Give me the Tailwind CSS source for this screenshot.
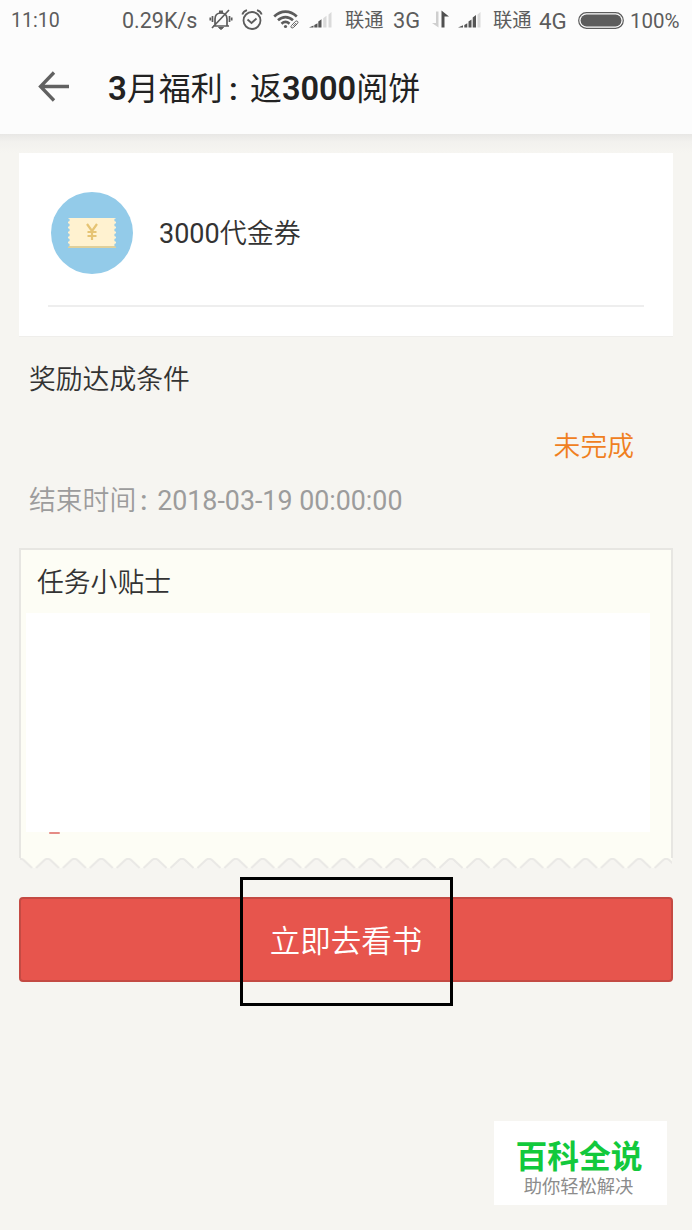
<!DOCTYPE html>
<html lang="zh-CN">
<head>
<meta charset="utf-8">
<title>3月福利</title>
<script src="https://cdn.jsdelivr.net/npm/@tailwindcss/browser@4"></script>
</head>
<body class="w-[692px] h-[1230px] overflow-hidden bg-[#f6f5f1] font-['Roboto','Noto_Sans_CJK_SC',sans-serif] text-[#333] whitespace-nowrap flex flex-col relative">
<header class="h-[134px] shrink-0 bg-[#fcfcfc] flex flex-col">
  <div class="h-10 flex items-center text-[20px] leading-10 text-[#5c5c5c]">
    <span class="ml-[11px] w-[111px] pt-px text-[19.600px]">11:10</span>
    <span class="w-[87px] pt-px text-[21.500px]">0.29K/s</span>
    <svg class="w-6 h-6 shrink-0" viewBox="0 0 24 24" fill="none" stroke="#5c5c5c" stroke-width="1.700"><path d="M4 18h16M6 18V11c0-4 2-6 6-6s6 2 6 6v7M20 2 3 20"/><path d="M9.500 19.500h5l-2.500 2z" fill="#5c5c5c" stroke-width="1"/><path d="M10 4h4" stroke-width="3"/><path d="M3.500 8v6M20.500 8v6M1.300 9.500v3M22.700 9.500v3"/></svg>
    <svg class="ml-[7px] w-6 h-6 shrink-0" viewBox="0 0 24 24" fill="none" stroke="#5c5c5c" stroke-width="1.800"><circle cx="12" cy="12.500" r="8.500"/><path d="M7.500 11.500 11.500 15l5-4.500M2.300 6.500C3 4.500 4.500 3 7 2.200M21.700 6.500C21 4.500 19.500 3 17 2.200"/></svg>
    <svg class="ml-[9px] w-[27px] h-6 shrink-0" viewBox="0 0 27 24" fill="none" stroke="#5c5c5c" stroke-width="2.600"><path d="M1.200 8.500C8 2 17 2 23.800 8.500M5 12.300c4.500-4.200 10.500-4.200 15 0M8.500 15.800c2.500-2.300 5.500-2.300 8 0"/><circle cx="12.500" cy="18.500" r="1.600" fill="#5c5c5c" stroke="none"/><path d="m18.500 17.500 4-4.200q1.500-.8 2.200.2.700 1-.2 2l-4 4q-1.500 1-2.300 0-.7-1 .3-2Zm1.500.8 3.200-3.300" stroke-width="1"/></svg>
    <svg class="ml-[8px] w-[25px] h-6 shrink-0" viewBox="0 0 25 24" fill="#555"><path d="M1 19.500 5.500 17.500v2zM6.300 17l3.200-1.700v4.200H6.300zM10.300 13.500l3.200-2.200v8.200h-3.200z"/><path d="M15.200 10.300l3.300-2.500v11.700h-3.300zM20.500 6.500l3-2.500v15.500h-3z" fill="#dadada"/></svg>
    <span class="ml-[12px] w-[48px] text-[19.300px] pt-px">联通</span>
    <span class="w-[38px] pt-px text-[21.800px]">3G</span>
    <svg class="w-[20px] h-6 shrink-0" viewBox="0 0 20 24"><path d="M7.500 3.500v16L1 15h4V3.500z" fill="#cfcfcf"/><path d="M10.500 19.500V2.500l7.500 6H13.500v11z" fill="#505050"/></svg>
    <svg class="ml-[6px] w-[25px] h-6 shrink-0" viewBox="0 0 25 24" fill="#555"><path d="M1 19.500 6 17.300v2.200zM7.300 17l3-1.700v4.200h-3zM11.500 13.500l3-2v8h-3zM15.700 9.500l3.300-2.500v12.500h-3.300z"/><path d="M20.500 6.500 23.500 4v15.500h-3z" fill="#dadada"/></svg>
    <span class="ml-[11px] w-[46px] text-[19.300px] pt-px">联通</span>
    <span class="w-[39px] pt-px text-[22.300px]">4G</span>
    <svg class="w-[46px] h-[17px] shrink-0" viewBox="0 0 46 17"><rect x=".7" y=".7" width="44.600" height="15.600" rx="7.800" fill="none" stroke="#5c5c5c" stroke-width="1.200"/><rect x="2.600" y="2.600" width="40.800" height="11.800" rx="5.900" fill="#5c5c5c"/></svg>
    <span class="ml-[6px] pt-px text-[20.500px]">100%</span>
  </div>
  <div class="h-[94px] flex items-center">
    <svg class="ml-[37px] w-8 h-8 shrink-0" viewBox="0 0 32 32" fill="none" stroke="#616161" stroke-width="3.300"><path d="M32 15.500H4M17 1.500 3.500 15.500 17 29.500"/></svg>
    <h1 class="ml-[38px] pt-[3px] text-[32px] leading-[46px] text-[#222] flex items-center"><span class="font-semibold text-[33px] pl-px">3</span><span>月福利</span><span class="font-semibold w-[27px] pl-[6px]">:</span><span>返</span><span class="font-semibold text-[32.500px]">3000</span><span>阅饼</span></h1>
  </div>
</header>
<div class="h-[19px] shrink-0 bg-linear-to-b from-[#e8e7e5] via-[#f2f1ee] via-40% to-[#f6f5f1]"></div>
<main class="px-[19px] flex flex-col text-[26.800px] leading-[40px]">
  <section class="h-[184px] bg-white border-b border-[#efeeeb] px-[29px]">
    <div class="h-[154px] pt-[8px] pl-[3px] flex items-center border-b-2 border-[#eeeeee]">
      <svg class="w-[82px] h-[82px] shrink-0" viewBox="0 0 82 82"><circle cx="41" cy="41" r="41" fill="#93cbe9"/><path d="M17 29h48v27H17z" fill="#dfd09b"/><path d="M17 26h48v28H17z" fill="#fff2d0"/><path d="M17 28v26M65 28v26" stroke="#93cbe9" stroke-width="3.500" stroke-linecap="round" stroke-dasharray="0 5"/><path d="m36 32 5 7 5-7M41 39v9M36.500 40h9M36.500 44h9" fill="none" stroke="#e6c474" stroke-width="2.200"/></svg>
      <span class="ml-[26px] pt-px text-[27px]">3000<span class="font-[350]">代金券</span></span>
    </div>
  </section>
  <div class="pt-[23px] pl-[10px] font-[350]">奖励达成条件</div>
  <div class="pt-[27px] pr-[39px] text-right text-[#f0801f] font-[350]">未完成</div>
  <div class="pt-[14px] pl-[10px] text-[#9c9c9c] flex"><span class="font-[350]">结束时间</span><span class="w-[21px] pl-[4px] font-medium">:</span><span>2018-03-19 00:00:00</span></div>
  <section class="mt-[27px] flex flex-col">
    <div class="h-[310px] bg-[#fdfdf5] border-2 border-b-0 border-[#e7e6e2] pl-[5px] pt-[13px]">
      <div class="pl-[11px] h-[50px] font-[350]">任务小贴士</div>
      <div class="h-[219px] w-[624px] bg-white"></div>
      <div class="ml-[23px] w-[11px] h-[2px] rounded-full bg-[#e58b85]"></div>
    </div>
    <svg class="w-[654px] h-[12px]" viewBox="0 0 654 12"><defs><pattern id="teeth" x="1.600" y="0" width="26.900" height="12" patternUnits="userSpaceOnUse"><path d="M0 0 2 .6 11.500 10h4L25 .6 26.900 0z" fill="#fdfdf5"/><path d="M0 .8Q1.500.8 3 2l8.500 8M15.400 10l8.500-8q1.500-1.200 3-1.200" fill="none" stroke="#e9e8e5" stroke-width="2"/></pattern></defs><rect x="1" width="652" height="12" fill="url(#teeth)"/></svg>
  </section>
  <button class="relative mt-[27px] h-[85px] rounded-[4px] border-2 border-[#c44a43] bg-[#e7554d] text-white text-[30.500px] leading-[44px] pt-[4px] font-[350] flex items-center justify-center">立即去看书
    <span class="absolute left-[219px] top-[-22px] w-[213px] h-[129px] border-[3px] border-black"></span>
  </button>
</main>
<aside class="absolute left-[494px] top-[1121px] w-[173px] h-[84px] bg-white flex flex-col items-center">
  <strong class="mt-[14px] -ml-[3px] text-[31.800px] leading-[44px] font-bold text-[#12c93c]">百科全说</strong>
  <span class="-mt-[6px] -ml-[4px] text-[18.300px] leading-[28px] text-[#8c8c8c]">助你轻松解决</span>
</aside>
</body>
</html>
